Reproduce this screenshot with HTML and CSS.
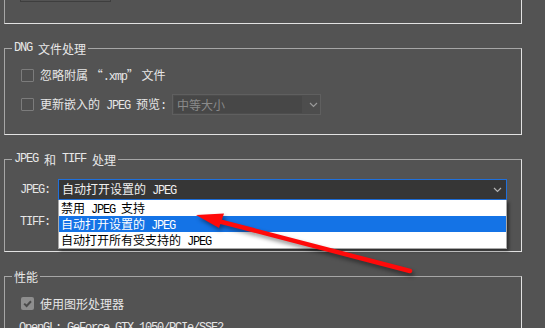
FILE: index.html
```html
<!DOCTYPE html>
<html lang="zh">
<head>
<meta charset="utf-8">
<link rel="stylesheet" href="styles.css">
</head>
<body>
<div class="page">
  <div class="frame frame-top"><div class="topbtn"></div></div>

  <div class="frame">
    <div class="frame-title"><span class="en">DNG </span>文件处理</div>
    <div class="frame-body body-dng">
      <div class="row">
        <span class="cb"></span>
        <span class="lbl">忽略附属 “<span class="en">.xmp</span>” 文件</span>
      </div>
      <div class="row">
        <span class="cb"></span>
        <span class="lbl">更新嵌入的<span class="en"> JPEG </span>预览<span class="en">:</span></span>
        <div class="sel-dis">
          <span class="sel-val">中等大小</span>
          <svg class="chev" width="9" height="6" viewBox="0 0 9 6"><path d="M1 1 L4.5 4.5 L8 1" fill="none" stroke="#9a9a9a" stroke-width="1.2"/></svg>
        </div>
      </div>
    </div>
  </div>

  <div class="frame">
    <div class="frame-title"><span class="en">JPEG </span>和<span class="en"> TIFF </span>处理</div>
    <div class="frame-body body-jpeg">
      <div class="row">
        <span class="flabel en">JPEG:</span>
        <div class="sel sel-active">
          <span class="sel-text">自动打开设置的<span class="en"> JPEG</span></span>
          <svg class="chev" width="9" height="6" viewBox="0 0 9 6"><path d="M1 1 L4.5 4.5 L8 1" fill="none" stroke="#b4b4b4" stroke-width="1.2"/></svg>
          <ul class="list">
            <li>禁用<span class="en"> JPEG </span>支持</li>
            <li class="selected">自动打开设置的<span class="en"> JPEG</span></li>
            <li>自动打开所有受支持的<span class="en"> JPEG</span></li>
          </ul>
        </div>
      </div>
      <div class="row">
        <span class="flabel en">TIFF:</span>
        <div class="sel"></div>
      </div>
    </div>
  </div>

  <div class="frame">
    <div class="frame-title">性能</div>
    <div class="frame-body body-perf">
      <div class="row">
        <span class="cb cb-on"><svg width="13" height="13" viewBox="0 0 13 13"><path d="M3.2 6.6 L5.6 9 L10 4.2" fill="none" stroke="#4a4a4a" stroke-width="2"/></svg></span>
        <span class="lbl">使用图形处理器</span>
      </div>
      <div class="gpu en">OpenGL: GeForce GTX 1050/PCIe/SSE2</div>
    </div>
  </div>

  <svg class="annot" width="545" height="328" viewBox="0 0 545 328">
    <line x1="218" y1="221" x2="410" y2="271" stroke="#ff0a0a" stroke-width="4.5" stroke-linecap="round"/>
    <polygon points="196,215 224,213.5 219,228" fill="#ff0a0a"/>
  </svg>
</div>
</body>
</html>
```

FILE: styles.css
```css
html, body {
  margin: 0;
  padding: 0;
  background: #535353;
}

body {
  font-family: "Noto Sans CJK SC", sans-serif;
  font-size: 12px;
  line-height: 16px;
  color: #e6e6e6;
}

.page {
  position: relative;
  width: 545px;
  height: 328px;
  overflow: hidden;
  background: #535353;
}

.en {
  font-family: "Liberation Mono", "Noto Sans CJK SC", monospace;
  letter-spacing: -1.2px;
}

.frame {
  box-sizing: border-box;
  width: 518px;
  margin: 24px 0 0 4px;
  border: 1px solid;
  border-color: #a6a6a6 #e2e2e2 #e2e2e2 #a6a6a6;
}

.frame-top {
  display: flow-root;
  margin-top: 0;
  height: 24px;
  border-top: none;
}

.topbtn {
  box-sizing: border-box;
  width: 91px;
  height: 21px;
  margin: -19px 0 0 15px;
  border: 1px solid #3e3e3e;
}

.frame-title {
  box-sizing: border-box;
  display: flex;
  align-items: center;
  width: max-content;
  height: 15px;
  margin: -8px 0 0 7px;
  padding: 0 2px;
  line-height: 15px;
  white-space: pre;
  background: #535353;
  color: #e8e8e8;
}

.frame-body {
  padding-left: 16px;
  display: flex;
  flex-direction: column;
}

.body-dng {
  padding-top: 9px;
  padding-bottom: 19px;
  gap: 8px;
}

.body-jpeg {
  padding-top: 12px;
  padding-bottom: 19px;
  gap: 11px;
}

.body-perf {
  padding-top: 9px;
  gap: 6px;
}

.row {
  display: flex;
  align-items: center;
  height: 21px;
}

.cb {
  box-sizing: border-box;
  width: 13px;
  height: 13px;
  border: 1px solid #7c7c7c;
  border-radius: 1px;
  background: #505050;
  margin-right: 6px;
  flex: none;
}

.cb-on {
  border: none;
  border-radius: 2px;
  background: #8e8e8e;
}

.cb-on svg {
  display: block;
}

.lbl {
  white-space: nowrap;
}

.sel-dis {
  box-sizing: border-box;
  display: flex;
  align-items: center;
  width: 149px;
  height: 21px;
  margin-left: 6px;
  border: 1px solid #5f5f5f;
  background: #4d4d4d;
}

.sel-val {
  box-sizing: border-box;
  width: 128px;
  height: 17px;
  margin-left: 1px;
  padding-left: 3px;
  line-height: 17px;
  background: #474747;
  color: #8a8a8a;
}

.sel-dis .chev {
  margin-left: 7px;
}

.flabel {
  width: 37px;
  flex: none;
  margin-left: -1px;
  color: #e6e6e6;
}

.sel {
  position: relative;
  box-sizing: border-box;
  display: flex;
  align-items: center;
  width: 449px;
  height: 21px;
  margin-left: 1px;
  padding-left: 3px;
  border: 1px solid #6a6a6a;
  background: #3a3a3a;
}

.sel-active {
  border-color: #1f70dc;
  background: #363636;
}

.sel-text {
  flex: 1;
  white-space: nowrap;
  color: #f0f0f0;
}

.sel .chev {
  margin-right: 4px;
}

.list {
  position: absolute;
  top: calc(100% + 1px);
  left: -1px;
  right: -1px;
  margin: 0;
  padding: 0;
  list-style: none;
  background: #ffffff;
  border: 1px solid #a9a9a9;
  border-top: none;
  box-shadow: 2px 2px 3px rgba(0, 0, 0, 0.45);
  z-index: 5;
}

.list li {
  height: 16px;
  line-height: 16px;
  padding-left: 2px;
  color: #000000;
  white-space: nowrap;
}

.list li.selected {
  background: #1473e6;
  color: #ffffff;
}

.gpu {
  margin-left: -2px;
  white-space: nowrap;
  color: #e6e6e6;
}

.annot {
  position: absolute;
  left: 0;
  top: 0;
  pointer-events: none;
  z-index: 10;
  filter: drop-shadow(2px 3px 2px rgba(0, 0, 0, 0.45));
}
```
